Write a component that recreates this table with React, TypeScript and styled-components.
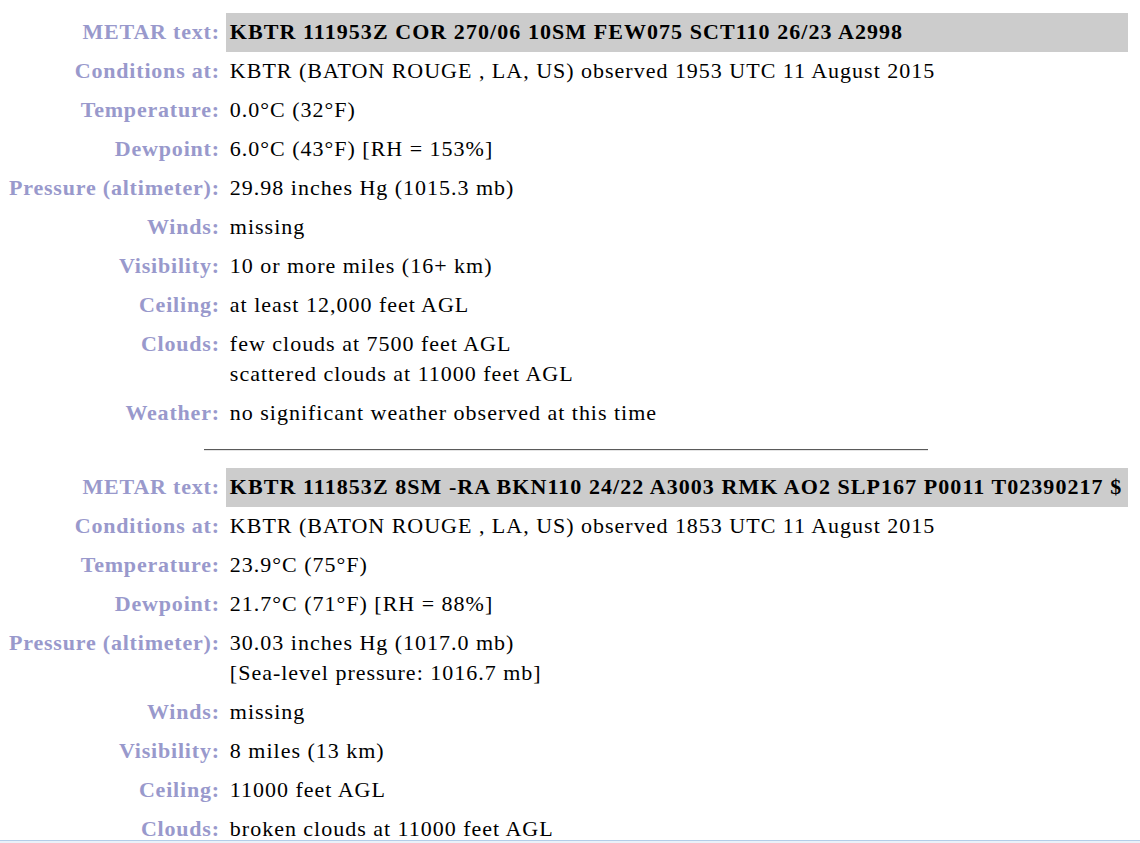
import React from "react";
import styled, { createGlobalStyle } from "styled-components";

type Row = { label: string; lines: string[]; metar?: boolean };

const firstObs: Row[] = [
  { label: "METAR text:", lines: ["KBTR 111953Z COR 270/06 10SM FEW075 SCT110 26/23 A2998"], metar: true },
  { label: "Conditions at:", lines: ["KBTR (BATON ROUGE , LA, US) observed 1953 UTC 11 August 2015"] },
  { label: "Temperature:", lines: ["0.0°C (32°F)"] },
  { label: "Dewpoint:", lines: ["6.0°C (43°F) [RH = 153%]"] },
  { label: "Pressure (altimeter):", lines: ["29.98 inches Hg (1015.3 mb)"] },
  { label: "Winds:", lines: ["missing"] },
  { label: "Visibility:", lines: ["10 or more miles (16+ km)"] },
  { label: "Ceiling:", lines: ["at least 12,000 feet AGL"] },
  { label: "Clouds:", lines: ["few clouds at 7500 feet AGL", "scattered clouds at 11000 feet AGL"] },
  { label: "Weather:", lines: ["no significant weather observed at this time"] },
];

const secondObs: Row[] = [
  { label: "METAR text:", lines: ["KBTR 111853Z 8SM -RA BKN110 24/22 A3003 RMK AO2 SLP167 P0011 T02390217 $"], metar: true },
  { label: "Conditions at:", lines: ["KBTR (BATON ROUGE , LA, US) observed 1853 UTC 11 August 2015"] },
  { label: "Temperature:", lines: ["23.9°C (75°F)"] },
  { label: "Dewpoint:", lines: ["21.7°C (71°F) [RH = 88%]"] },
  { label: "Pressure (altimeter):", lines: ["30.03 inches Hg (1017.0 mb)", "[Sea-level pressure: 1016.7 mb]"] },
  { label: "Winds:", lines: ["missing"] },
  { label: "Visibility:", lines: ["8 miles (13 km)"] },
  { label: "Ceiling:", lines: ["11000 feet AGL"] },
  { label: "Clouds:", lines: ["broken clouds at 11000 feet AGL"] },
];

const GlobalStyle = createGlobalStyle`
  html, body {
    background: #ffffff;
    overflow: hidden;
  }
  body {
    margin: 8px;
    font-family: "Liberation Serif", "Times New Roman", serif;
    color: #000000;
  }
`;

const ObsTable = styled.table<{ $top: number }>`
  width: calc(100% - 4px);
  border-collapse: separate;
  border-spacing: 0;
  font-size: 22px;
  line-height: 30px;
  letter-spacing: 0.8px;
  margin-top: ${(p) => p.$top}px;
`;

const Label = styled.th`
  text-align: right;
  vertical-align: top;
  white-space: nowrap;
  font-weight: bold;
  color: #9999cc;
  padding: 4px 6px 5px 1px;
  width: 1%;
`;

const Value = styled.td<{ $metar?: boolean }>`
  text-align: left;
  vertical-align: top;
  white-space: nowrap;
  padding: 4px 4px 5px 4px;
  letter-spacing: ${(p) => (p.$metar ? "1.06px" : "0.99px")};
  font-weight: ${(p) => (p.$metar ? "bold" : "normal")};
  background: ${(p) => (p.$metar ? "#cccccc" : "transparent")};
`;

const Divider = styled.hr`
  width: 724px;
  margin: 16px 0 17px 196px;
  border: 0;
  border-top: 1px solid #5a5a5a;
  border-bottom: 1px solid #e4e4e4;
  height: 0;
`;

const StatusEdge = styled.div`
  position: fixed;
  left: 0;
  right: 0;
  bottom: 0;
  height: 2px;
  border-top: 1px solid #b4cde8;
  background: #eaf1f9;
`;

const Observation = ({ rows, top }: { rows: Row[]; top: number }) => (
  <ObsTable $top={top}>
    <tbody>
      {rows.map((r) => (
        <tr key={r.label}>
          <Label>{r.label}</Label>
          <Value $metar={r.metar}>
            {r.lines.map((l, i) => (
              <React.Fragment key={i}>
                {i > 0 && <br />}
                {l}
              </React.Fragment>
            ))}
          </Value>
        </tr>
      ))}
    </tbody>
  </ObsTable>
);

const App = () => {
  return (
    <>
      <GlobalStyle />
      <Observation rows={firstObs} top={5} />
      <Divider />
      <Observation rows={secondObs} top={0} />
      <StatusEdge />
    </>
  );
};

export default App;
